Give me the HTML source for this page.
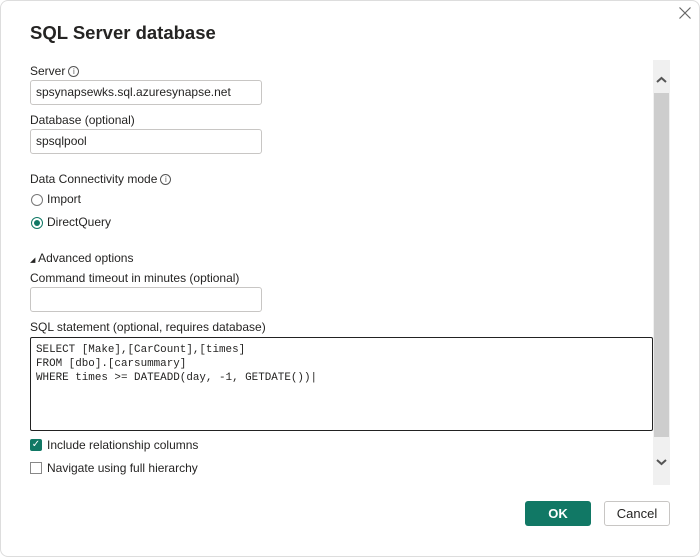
<!DOCTYPE html>
<html><head><style>
body{margin:0;width:700px;height:557px;background:#fff;font-family:"Liberation Sans",sans-serif;color:#252423;position:relative;overflow:hidden}
.a{position:absolute}
.lbl{font-size:12px;color:#252423}
.inp{position:absolute;left:30px;border:1px solid #c8c6c4;border-radius:3px;background:#fff;font-size:12px;line-height:23px;padding-left:5px;box-sizing:border-box;width:232px;height:25px}
.info{display:inline-block;width:9px;height:9px;border:1px solid #555;border-radius:50%;font-size:8px;line-height:9px;text-align:center;vertical-align:1px;margin-left:3px;color:#555}
</style></head><body>
<div class="a" style="left:0;top:0;width:698px;height:555px;border:1px solid #ddd;border-radius:8px"></div>
<svg class="a" style="left:678px;top:6px" width="14" height="14"><path d="M1.5 1.5L12.5 12.5M12.5 1.5L1.5 12.5" stroke="#666" stroke-width="1.2"/></svg>
<div class="a" style="left:30px;top:22px;font-size:18.5px;font-weight:bold;color:#252423">SQL Server database</div>
<div class="a lbl" style="left:30px;top:64px">Server<span class="info">i</span></div>
<div class="inp" style="top:80px">spsynapsewks.sql.azuresynapse.net</div>
<div class="a lbl" style="left:30px;top:113px">Database (optional)</div>
<div class="inp" style="top:129px">spsqlpool</div>
<div class="a lbl" style="left:30px;top:172px">Data Connectivity mode<span class="info">i</span></div>
<div class="a" style="left:31px;top:194px;width:10px;height:10px;border:1px solid #777;border-radius:50%"></div>
<div class="a lbl" style="left:47px;top:192px">Import</div>
<div class="a" style="left:31px;top:217px;width:10px;height:10px;border:1px solid #117865;border-radius:50%"></div>
<div class="a" style="left:34px;top:220px;width:6px;height:6px;background:#117865;border-radius:50%"></div>
<div class="a lbl" style="left:47px;top:215px">DirectQuery</div>
<div class="a lbl" style="left:30px;top:251px"><span style="font-size:7px">◢</span> Advanced options</div>
<div class="a lbl" style="left:30px;top:271px">Command timeout in minutes (optional)</div>
<div class="inp" style="top:287px"></div>
<div class="a lbl" style="left:30px;top:320px">SQL statement (optional, requires database)</div>
<div class="a" style="left:30px;top:337px;border:1px solid #222;border-radius:2px;font-family:'Liberation Mono',monospace;font-size:10.9px;line-height:14px;padding:5px 0 0 5px;box-sizing:border-box;width:623px;height:94px;white-space:pre">SELECT [Make],[CarCount],[times]
FROM [dbo].[carsummary]
WHERE times &gt;= DATEADD(day, -1, GETDATE())|</div>
<div class="a" style="left:30px;top:439px;width:12px;height:12px;background:#117865;border-radius:2px;color:#fff;font-size:10px;line-height:12px;text-align:center">✓</div>
<div class="a lbl" style="left:47px;top:438px">Include relationship columns</div>
<div class="a" style="left:30px;top:462px;width:10px;height:10px;border:1px solid #888"></div>
<div class="a lbl" style="left:47px;top:461px">Navigate using full hierarchy</div>
<div class="a" style="left:653px;top:60px;width:17px;height:425px;background:#f0f0f0"></div>
<div class="a" style="left:654px;top:93px;width:15px;height:344px;background:#cdcdcd"></div>
<svg class="a" style="left:655px;top:75px" width="13" height="10"><path d="M2 7L6.5 3L11 7" stroke="#555" stroke-width="2" fill="none"/></svg>
<svg class="a" style="left:655px;top:457px" width="13" height="10"><path d="M2 3L6.5 7L11 3" stroke="#555" stroke-width="2" fill="none"/></svg>
<div class="a" style="left:525px;top:501px;width:66px;height:25px;background:#117865;border-radius:3px;color:#fff;font-weight:bold;font-size:13px;line-height:25px;text-align:center">OK</div>
<div class="a" style="left:604px;top:501px;width:64px;height:23px;border:1px solid #c8c6c4;border-radius:3px;font-size:13px;line-height:23px;text-align:center;color:#252423">Cancel</div>
</body></html>
